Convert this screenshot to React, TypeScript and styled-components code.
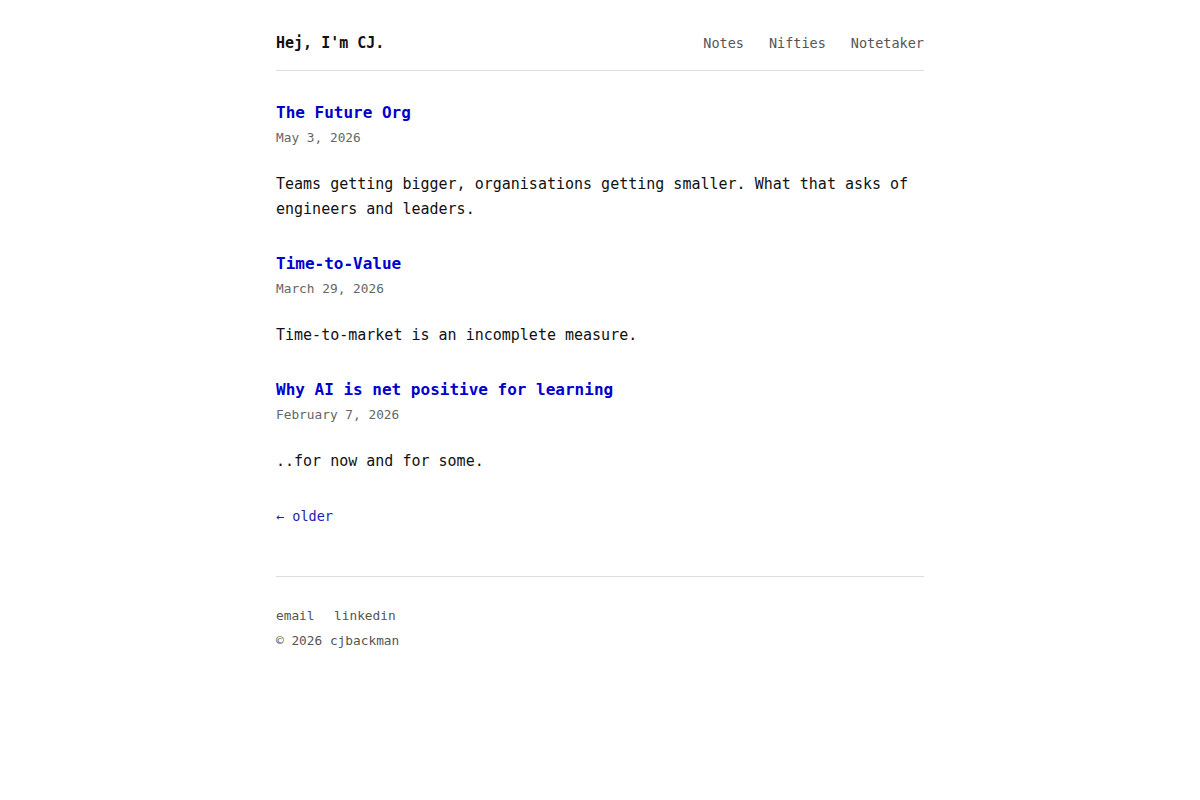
import React from 'react';
import styled, { createGlobalStyle } from 'styled-components';

const GlobalStyle = createGlobalStyle`
    html, body {
        margin: 0;
        padding: 0;
        background: #ffffff;
    }
    body {
        font-family: 'DejaVu Sans Mono', 'Liberation Mono', monospace;
        color: #111111;
    }
`;

const Page = styled.div`
    width: 648px;
    margin: 0 auto;
    padding-top: 33px;
`;

const Header = styled.header`
    display: flex;
    justify-content: space-between;
    align-items: center;
    padding-bottom: 17px;
    border-bottom: 1px solid #dddddd;
`;

const SiteTitle = styled.a`
    font-size: 15px;
    font-weight: 700;
    line-height: 20px;
    color: #111111;
    text-decoration: none;
`;

const Nav = styled.nav`
    display: flex;
    gap: 25px;
`;

const NavLink = styled.a`
    font-size: 13.5px;
    line-height: 20px;
    color: #555555;
    text-decoration: none;
`;

const PostList = styled.main`
    display: flex;
    flex-direction: column;
    gap: 30.5px;
    padding-top: 30px;
`;

const Post = styled.article`
    display: flex;
    flex-direction: column;
`;

const PostTitle = styled.a`
    font-size: 16px;
    font-weight: 700;
    line-height: 24px;
    color: #0000cc;
    text-decoration: none;
`;

const PostDate = styled.time`
    margin-top: 3px;
    font-size: 12.8px;
    line-height: 20px;
    color: #666666;
`;

const Summary = styled.p`
    margin: 23.5px 0 0;
    font-size: 15px;
    line-height: 25px;
    color: #111111;
`;

const Pager = styled.div`
    margin-top: 32px;
    padding-bottom: 50px;
    border-bottom: 1px solid #dddddd;
`;

const OlderLink = styled.a`
    font-size: 13.5px;
    line-height: 20px;
    color: #1c1cb0;
    text-decoration: none;
`;

const Footer = styled.footer`
    display: flex;
    flex-direction: column;
    gap: 5px;
    padding-top: 29px;
    font-size: 12.8px;
    line-height: 20px;
    color: #555555;
`;

const FooterLinks = styled.div`
    display: flex;
    gap: 19.5px;
`;

const FooterLink = styled.a`
    color: #555555;
    text-decoration: none;
`;

const posts = [
    {
        title: 'The Future Org',
        date: 'May 3, 2026',
        summary: 'Teams getting bigger, organisations getting smaller. What that asks of engineers and leaders.',
    },
    {
        title: 'Time-to-Value',
        date: 'March 29, 2026',
        summary: 'Time-to-market is an incomplete measure.',
    },
    {
        title: 'Why AI is net positive for learning',
        date: 'February 7, 2026',
        summary: '..for now and for some.',
    },
];

const App: React.FC = () => {
    return (
        <>
            <GlobalStyle />
            <Page>
                <Header>
                    <SiteTitle href="#">Hej, I'm CJ.</SiteTitle>
                    <Nav>
                        <NavLink href="#">Notes</NavLink>
                        <NavLink href="#">Nifties</NavLink>
                        <NavLink href="#">Notetaker</NavLink>
                    </Nav>
                </Header>

                <PostList>
                    {posts.map((post) => (
                        <Post key={post.title}>
                            <PostTitle href="#">{post.title}</PostTitle>
                            <PostDate>{post.date}</PostDate>
                            <Summary>{post.summary}</Summary>
                        </Post>
                    ))}
                </PostList>

                <Pager>
                    <OlderLink href="#">← older</OlderLink>
                </Pager>

                <Footer>
                    <FooterLinks>
                        <FooterLink href="#">email</FooterLink>
                        <FooterLink href="#">linkedin</FooterLink>
                    </FooterLinks>
                    <span>© 2026 cjbackman</span>
                </Footer>
            </Page>
        </>
    );
};

export default App;
